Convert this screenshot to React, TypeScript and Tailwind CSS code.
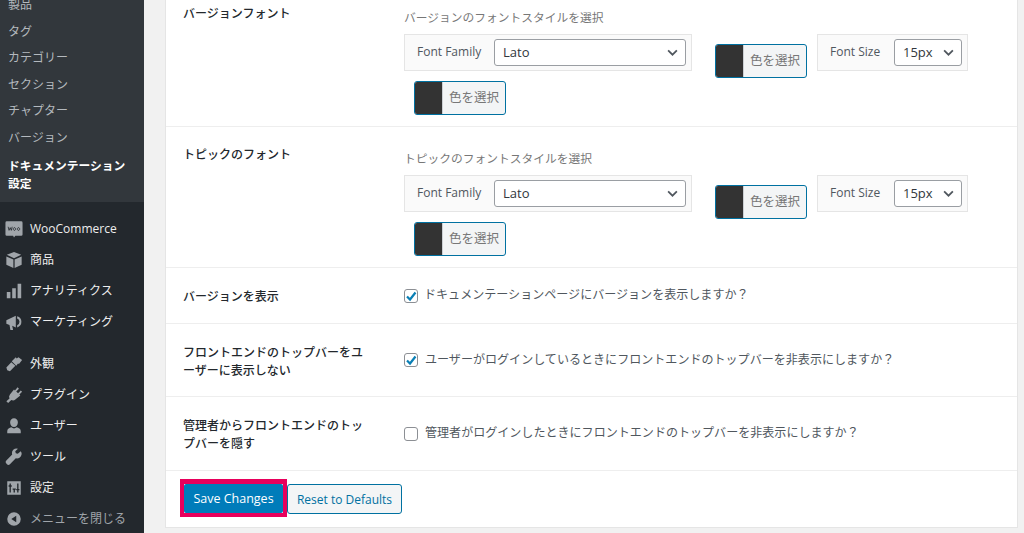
import React from "react";

const font = { fontFamily: '"Open Sans","Noto Sans CJK JP",sans-serif' };

function Icon({ children }: { children: React.ReactNode }) {
  return (
    <svg viewBox="0 0 20 20" className="w-[18px] h-[18px] fill-[#a0a5aa]">
      {children}
    </svg>
  );
}

const icons: Record<string, React.ReactNode> = {
  woo: (
    <>
      <path d="M2 1.500h16a1.500 1.500 0 0 1 1.500 1.500v13a1.500 1.500 0 0 1-1.500 1.500h-6.500l-1.500 2-1-2H2A1.500 1.500 0 0 1 .5 16v-13A1.500 1.500 0 0 1 2 1.500z" />
      <path d="M3.500 7.500l1 4 1.300-3 1.200 3 1-4M10.500 8.500a1.300 1.500 0 1 0 .01 0M15 8.500a1.300 1.500 0 1 0 .01 0" fill="none" stroke="#23282d" strokeWidth="0.9" />
    </>
  ),
  box: (
    <>
      <path d="M10 1l8 3.300-8 3.700-8-3.700z" />
      <path d="M1.500 6l7.800 3.500V19l-7.800-3.600zM18.500 6l-7.800 3.500V19l7.800-3.600z" />
    </>
  ),
  bars: <path d="M2 11h4v7H2zM8 7h4v11H8zM14 2h4v16h-4z" />,
  mega: (
    <>
      <path d="M1.500 8l10.500-5v13L8 14.200 9 19H6l-1-5.800-3.500-1.200z" />
      <path d="M13.500 3.500a6.500 6.500 0 0 1 0 12.500v-2.500a4 4 0 0 0 0-7.500z" />
    </>
  ),
  brush: (
    <path d="M19 5.500l-4-3-2 1.500-1-1.500-4.500 4.500 5 5 2-2.500 1 .5zM7 8l-5.500 6 1 3 3 1 6-6z" />
  ),
  plug: (
    <path d="M14 1.500l1.500 1.500-3 3 2 2 3-3L19 6.500l-3 3 1 1-5.500 4.500a4 4 0 0 1-4.500.5L3.500 19 1.500 17l3.500-3a4 4 0 0 1 .5-4.500L10 4l1 1z" />
  ),
  user: (
    <path d="M10 1.500a4.300 4.300 0 0 1 4.300 4.500c0 2.700-1.900 5-4.300 5S5.700 8.700 5.700 6A4.300 4.300 0 0 1 10 1.500zM2.500 15.500c0-2.500 2.500-3.500 4.500-4 1 .8 2 1.200 3 1.200s2-.4 3-1.200c2 .5 4.500 1.500 4.500 4V18h-15z" />
  ),
  wrench: (
    <path d="M17.500 3.500l-3.300 3-2.200-.6-.6-2.200 3-3A5.200 5.200 0 0 0 8 7.300L1.500 14a2.400 2.400 0 0 0 0 3.300l.7.7a2.400 2.400 0 0 0 3.300 0L12 11.500a5.200 5.200 0 0 0 5.500-8z" />
  ),
  sliders: (
    <path
      fillRule="evenodd"
      d="M2.500 2.500h15v15h-15zM5 5v2H4v1.500h1V15h1.500V8.500h1V7h-1V5zM8.500 10.500V12h1v3H11v-3h1v-1.500zM13.500 5v6h-1v1.500h1V15H15v-2.500h1V11h-1V5z"
    />
  ),
  collapse: (
    <path
      fillRule="evenodd"
      d="M10 2.500a7.500 7.500 0 1 1 0 15 7.500 7.500 0 0 1 0-15zM12.500 6.500L7 10l5.500 3.500z"
    />
  ),
};

const sub = ["製品", "タグ", "カテゴリー", "セクション", "チャプター", "バージョン"];
const mainA = [
  ["woo", "WooCommerce"],
  ["box", "商品"],
  ["bars", "アナリティクス"],
  ["mega", "マーケティング"],
];
const mainB = [
  ["brush", "外観"],
  ["plug", "プラグイン"],
  ["user", "ユーザー"],
  ["wrench", "ツール"],
  ["sliders", "設定"],
];

function MenuItem({ icon, label, dim }: { icon: string; label: string; dim?: boolean }) {
  return (
    <div className={`flex items-center h-[31px] pl-[5px] text-[12px] ${dim ? "text-[#a0a5aa]" : "text-[#eeeeee]"}`}>
      <span className="w-[25px] shrink-0 flex">
        <Icon>{icons[icon]}</Icon>
      </span>
      <span>{label}</span>
    </div>
  );
}

function Sidebar() {
  return (
    <aside className="w-[144px] shrink-0 bg-[#23282d]">
      <div className="bg-[#32373c] -mt-[8px] pb-[10px] text-[12px]">
        {sub.map((s) => (
          <div key={s} className="h-[26.500px] pl-[8px] flex items-center text-[#b4b9be]">
            {s}
          </div>
        ))}
        <div className="pl-[8px] pr-[10px] pt-[5px] text-[11.750px] leading-[18px] font-semibold text-white">
          ドキュメンテーション
          <br />
          設定
        </div>
      </div>
      <div className="pt-[11px]">
        {mainA.map(([i, l]) => (
          <MenuItem key={l} icon={i} label={l} />
        ))}
      </div>
      <div className="pt-[11px]">
        {mainB.map(([i, l]) => (
          <MenuItem key={l} icon={i} label={l} />
        ))}
        <MenuItem icon="collapse" label="メニューを閉じる" dim />
      </div>
    </aside>
  );
}

function Chevron() {
  return (
    <svg viewBox="0 0 12 8" className="w-[11px] h-[7px] fill-none stroke-[#50575e] stroke-2">
      <path d="M1 1.500l5 5 5-5" />
    </svg>
  );
}

function Select({ value, w }: { value: string; w: string }) {
  return (
    <div className={`${w} h-[27px] bg-white border border-[#9a9ea3] rounded-[3px] flex items-center justify-between pl-[8px] pr-[7px] text-[13px] text-[#32373c]`}>
      <span>{value}</span>
      <Chevron />
    </div>
  );
}

function ColorButton({ className }: { className: string }) {
  return (
    <div className={`${className} w-[92px] h-[34px] flex border border-[#0071a1] rounded-[3px] bg-[#f3f5f6] overflow-hidden`}>
      <span className="w-[28px] bg-[#333333] border-r border-[#ccd0d4]" />
      <span className="flex-1 text-center leading-[32px] text-[12.500px] text-[#777777]">色を選択</span>
    </div>
  );
}

function FontRow({ label, desc }: { label: string; desc: string }) {
  return (
    <div className="flex h-[141px] border-b border-[#eeeeee] pl-[17px]">
      <div className="w-[221px] shrink-0 pt-[19px] text-[12px] leading-[18px] font-medium text-[#23282d]">{label}</div>
      <div className="flex-1 pt-[22px]">
        <div className="text-[11.750px] leading-[18px] text-[#777777]">{desc}</div>
        <div className="flex flex-wrap w-[590px] items-start">
          <div className="mt-[8px] w-[288px] h-[37px] flex items-center border border-[#e5e5e5] bg-[#fafafa] pl-[12px] pr-[5px] justify-between">
            <span className="text-[12px] text-[#50575e] -translate-y-px">Font Family</span>
            <Select value="Lato" w="w-[192px]" />
          </div>
          <ColorButton className="mt-[18px] ml-[23px]" />
          <div className="mt-[8px] ml-[10px] w-[151px] h-[37px] flex items-center border border-[#e5e5e5] bg-[#fafafa] pl-[12px] pr-[5px] justify-between">
            <span className="text-[12px] text-[#50575e] -translate-y-px">Font Size</span>
            <Select value="15px" w="w-[68px]" />
          </div>
          <ColorButton className="ml-[10px] mt-[3px]" />
        </div>
      </div>
    </div>
  );
}

function Checkbox({ checked }: { checked?: boolean }) {
  return (
    <span className="w-[14px] h-[14px] shrink-0 border border-[#8c8f94] rounded-[3px] bg-white flex items-center justify-center">
      {checked && (
        <svg viewBox="0 0 12 12" className="w-[12px] h-[12px] fill-none stroke-[#0a7fb5] stroke-[2.200]">
          <path d="M2 6.500l3 3 5.500-7" />
        </svg>
      )}
    </span>
  );
}

function CheckRow({ label, text, checked, h, gap, drop }: { label: React.ReactNode; text: string; checked?: boolean; h: string; gap: string; drop: string }) {
  return (
    <div className={`flex items-center ${h} border-b border-[#eeeeee] pl-[17px]`}>
      <div className={`w-[221px] shrink-0 pr-[37px] ${drop} text-[12px] leading-[18px] font-medium text-[#23282d]`}>{label}</div>
      <div className={`flex items-center ${gap}`}>
        <Checkbox checked={checked} />
        <span className="text-[12.050px] text-[#50575e]">{text}</span>
      </div>
    </div>
  );
}

export default function App() {
  return (
    <div className="flex w-[1024px] h-[533px] overflow-hidden bg-[#f1f1f1]" style={font}>
      <Sidebar />
      <main className="flex-1 pl-[21px] pr-[6px]">
        <div className="-mt-[15px] bg-white border border-[#e5e5e5]">
          <FontRow label="バージョンフォント" desc="バージョンのフォントスタイルを選択" />
          <FontRow label="トピックのフォント" desc="トピックのフォントスタイルを選択" />
          <CheckRow h="h-[56px]" gap="gap-[6px]" drop="mt-[2px]" checked label="バージョンを表示" text="ドキュメンテーションページにバージョンを表示しますか？" />
          <CheckRow h="h-[73px]" gap="gap-[7px]" drop="mt-[4px]" checked label="フロントエンドのトップバーをユーザーに表示しない" text="ユーザーがログインしているときにフロントエンドのトップバーを非表示にしますか？" />
          <CheckRow h="h-[74px]" gap="gap-[7px]" drop="mt-[2px]" label="管理者からフロントエンドのトップバーを隠す" text="管理者がログインしたときにフロントエンドのトップバーを非表示にしますか？" />
          <div className="h-[56px] pl-[14px] pt-[8px] flex items-start">
            <div className="w-[107px] h-[38px] border-x-4 border-t-[5px] border-b-4 border-[#e8005c] shrink-0">
              <button className="w-full h-full pt-[2px] bg-[#007cba] rounded-[2px] text-[12.500px] text-white">Save Changes</button>
            </div>
            <button className="mt-[5px] w-[115px] h-[30px] pt-[1px] bg-[#f3f5f6] border border-[#0071a1] rounded-[3px] text-[12px] text-[#0071a1]">Reset to Defaults</button>
          </div>
        </div>
      </main>
    </div>
  );
}
